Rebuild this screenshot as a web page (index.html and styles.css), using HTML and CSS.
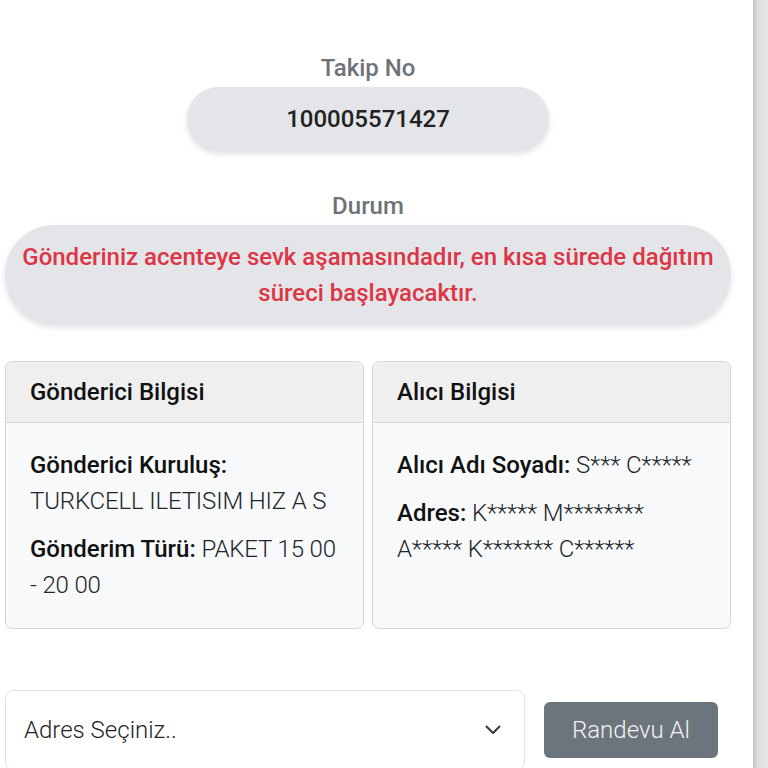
FILE: index.html
```html
<!DOCTYPE html>
<html lang="tr">
<head>
    <meta charset="UTF-8">
    <meta name="viewport" content="width=device-width, initial-scale=1.0">
    <title>Gönderi Takip</title>
    <link rel="stylesheet" href="styles.css">
</head>
<body>
    <div class="page">
        <div class="content">
            <div class="info-block">
                <div class="info-label">Takip No</div>
                <div class="pill pill-number">100005571427</div>
            </div>

            <div class="info-block">
                <div class="info-label">Durum</div>
                <div class="pill pill-status">Gönderiniz acenteye sevk aşamasındadır, en kısa sürede dağıtım süreci başlayacaktır.</div>
            </div>

            <div class="card-row">
                <div class="card">
                    <div class="card-header">Gönderici Bilgisi</div>
                    <div class="card-body">
                        <p><b>Gönderici Kuruluş:</b> TURKCELL ILETISIM HIZ A S</p>
                        <p><b>Gönderim Türü:</b> PAKET 15 00 - 20 00</p>
                    </div>
                </div>
                <div class="card">
                    <div class="card-header">Alıcı Bilgisi</div>
                    <div class="card-body">
                        <p><b>Alıcı Adı Soyadı:</b> S*** C*****</p>
                        <p><b>Adres:</b> K***** M******** A***** K******* C******</p>
                    </div>
                </div>
            </div>

            <div class="appointment">
                <div class="address-select">
                    <span>Adres Seçiniz..</span>
                    <svg class="chevron" width="16" height="10" viewBox="0 0 16 10">
                        <path d="M1.5 1.5 L8 8 L14.5 1.5" fill="none" stroke="#343a40" stroke-width="2" stroke-linecap="round" stroke-linejoin="round"/>
                    </svg>
                </div>
                <button class="btn-appointment">Randevu Al</button>
            </div>
        </div>
    </div>
    <div class="side-strip"></div>
</body>
</html>
```

FILE: styles.css
```css
body {
    margin: 0;
    display: flex;
    height: 100vh;
    overflow: hidden;
    font-family: Roboto, "Noto Sans", sans-serif;
    font-size: 24px;
    line-height: 36px;
    color: #212529;
    background-color: #fff;
}

.page {
    flex: 1;
}

.content {
    width: 726px;
    margin-left: 5px;
    padding-top: 50px;
}

.info-block {
    display: flex;
    flex-direction: column;
    align-items: center;
    margin-bottom: 37px;
}

.info-label {
    color: #6f7378;
    font-weight: 500;
    margin-bottom: 1px;
}

.pill {
    background-color: #e4e5e8;
    border-radius: 50px;
    box-shadow: 0px 3px 6px 0px rgba(0, 0, 0, 0.12);
    text-align: center;
    font-weight: 500;
}

.pill-number {
    width: 362px;
    padding: 14px 0;
    color: #222;
}

.pill-status {
    align-self: stretch;
    padding: 14px 6px 13px;
    color: #dc3545;
}

.card-row {
    display: flex;
    gap: 8px;
}

.card {
    flex: 1;
    border: 1px solid #d6d7d9;
    border-radius: 7px;
    background-color: #f8f9fa;
    overflow: hidden;
}

.card-header {
    padding: 12px 24px;
    background-color: #efeff0;
    border-bottom: 1px solid #d6d7d9;
    font-weight: 500;
    color: #111;
}

.card-body {
    padding: 24px 24px 25px;
    font-weight: 300;
    letter-spacing: -0.15px;
}

.card-body p {
    margin: 0 0 12px;
}

.card-body p:last-child {
    margin-bottom: 0;
}

.card-body b {
    font-weight: 500;
    color: #111;
    letter-spacing: 0;
}

.appointment {
    display: flex;
    align-items: center;
    gap: 19px;
    margin-top: 61px;
}

.address-select {
    width: 520px;
    height: 80px;
    box-sizing: border-box;
    border: 1px solid #dee2e6;
    border-radius: 8px;
    padding: 0 23px 0 18px;
    display: flex;
    align-items: center;
    justify-content: space-between;
    background-color: #fff;
    font-weight: 300;
}

.chevron {
    display: block;
}

.btn-appointment {
    font-family: inherit;
    font-size: 24px;
    line-height: 36px;
    font-weight: 300;
    padding: 10px 28px;
    background-color: #6c757d;
    color: #f2f2f2;
    border: none;
    border-radius: 6px;
}

.side-strip {
    width: 15px;
    height: 100vh;
    background: linear-gradient(to right, #c6c6c6 0px, #cfcfcf 3px, #dedede 4px, #e6e6e6 15px);
}
```
